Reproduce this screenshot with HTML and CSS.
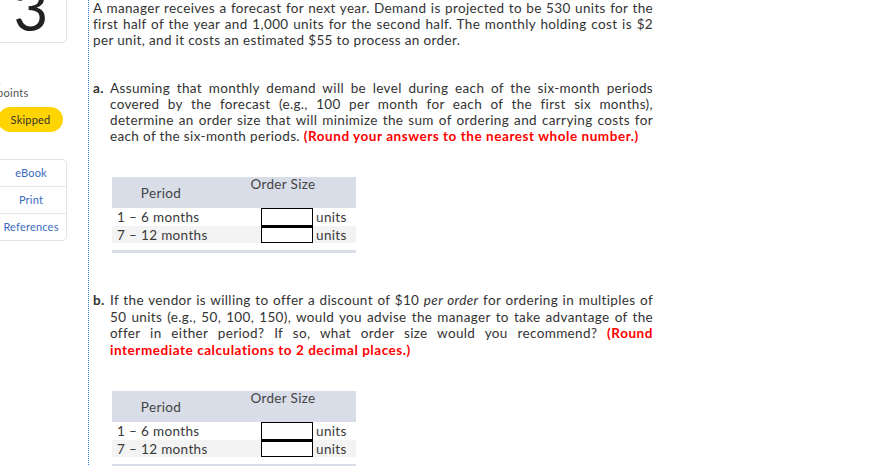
FILE: index.html
```html
<!DOCTYPE html>
<html>
<head>
<meta charset="utf-8">
<link rel="stylesheet" href="styles.css">
</head>
<body>
<div class="page">
  <aside class="side">
    <div class="qnum">3</div>
    <div class="score">1</div>
    <div class="pts">points</div>
    <div class="skipped">Skipped</div>
    <div class="links">
      <div class="link">eBook</div>
      <div class="link">Print</div>
      <div class="link">References</div>
    </div>
  </aside>
  <main class="main">
    <p class="intro">A manager receives a forecast for next year. Demand is projected to be 530 units for the first half of the year and 1,000 units for the second half. The monthly holding cost is $2 per unit, and it costs an estimated $55 to process an order.</p>

    <div class="part part-a">
      <span class="label">a.</span>
      <p class="ptext">Assuming that monthly demand will be level during each of the six-month periods covered by the forecast (e.g., 100 per month for each of the first six months), determine an order size that will minimize the sum of ordering and carrying costs for each of the six-month periods. <b class="red">(Round your answers to the nearest whole number.)</b></p>
    </div>

    <div class="tbl tbl-a">
      <div class="thead">
        <div class="th th-period">Period</div>
        <div class="th th-size">Order Size</div>
      </div>
      <div class="row row1">
        <div class="cell-period">1 – 6 months</div>
        <div class="cell-input"><span class="box"></span></div>
        <div class="cell-unit">units</div>
      </div>
      <div class="row row2">
        <div class="cell-period">7 – 12 months</div>
        <div class="cell-input"><span class="box"></span></div>
        <div class="cell-unit">units</div>
      </div>
      <div class="bar"></div>
    </div>

    <div class="part part-b">
      <span class="label">b.</span>
      <p class="ptext">If the vendor is willing to offer a discount of $10 <i>per order</i> for ordering in multiples of 50 units (e.g., 50, 100, 150), would you advise the manager to take advantage of the offer in either period? If so, what order size would you recommend? <b class="red">(Round intermediate calculations to 2 decimal places.)</b></p>
    </div>

    <div class="tbl tbl-b">
      <div class="thead">
        <div class="th th-period">Period</div>
        <div class="th th-size">Order Size</div>
      </div>
      <div class="row row1">
        <div class="cell-period">1 – 6 months</div>
        <div class="cell-input"><span class="box"></span></div>
        <div class="cell-unit">units</div>
      </div>
      <div class="row row2">
        <div class="cell-period">7 – 12 months</div>
        <div class="cell-input"><span class="box"></span></div>
        <div class="cell-unit">units</div>
      </div>
      <div class="bar"></div>
    </div>
  </main>
</div>
</body>
</html>
```

FILE: styles.css
```css
html, body {
  margin: 0;
  padding: 0;
  background: #fff;
  overflow: hidden;
}
body {
  font-family: Lato, "Liberation Sans", sans-serif;
  color: #333;
}
.page {
  display: flex;
  align-items: stretch;
  min-height: 466px;
}
.side {
  width: 93px;
  margin-left: -5px;
  flex: none;
  display: flex;
  flex-direction: column;
}
.qnum {
  width: 72px;
  height: 62px;
  margin-top: -19px;
  border: 1px solid #e3e3e3;
  border-top: none;
  border-radius: 0 0 5px 5px;
  font-size: 60px;
  font-weight: normal;
  line-height: 54px;
  text-align: center;
  color: #222;
  box-sizing: border-box;
}
.score {
  margin-top: 31px;
  width: 6px;
  font-size: 11px;
  line-height: 12px;
  color: #2f5fb3;
  overflow: hidden;
  text-align: right;
  direction: rtl;
}
.pts {
  padding-left: 2px;
  font-size: 11px;
  line-height: 14px;
  color: #555;
  letter-spacing: 0.3px;
}
.skipped {
  margin-top: 7px;
  margin-left: 3px;
  width: 65px;
  height: 25px;
  border-radius: 13px;
  background: #ffd400;
  font-size: 11px;
  line-height: 25px;
  text-align: center;
  color: #333;
  letter-spacing: 0.2px;
}
.links {
  margin-top: 27px;
  width: 72px;
  border: 1px solid #e2e2e2;
  border-radius: 4px;
  box-sizing: border-box;
}
.link {
  height: 26px;
  line-height: 26px;
  font-size: 11px;
  text-align: center;
  color: #3a6bbf;
  border-top: 1px solid #e6e6e6;
  letter-spacing: 0.2px;
}
.link:first-child {
  border-top: none;
}
.main {
  flex: none;
  width: 560px;
  border-left: 1px dotted #2f7ad8;
  padding-left: 4px;
  font-size: 13.5px;
  line-height: 16px;
  letter-spacing: 0.35px;
}
p {
  margin: 0;
}
.intro {
  text-align: justify;
}
.part {
  display: flex;
}
.part-a {
  margin-top: 32px;
}
.part-b {
  margin-top: 39px;
  line-height: 16.5px;
}
.label {
  width: 17px;
  flex: none;
  font-weight: bold;
}
.ptext {
  flex: 1;
  text-align: justify;
}
.red {
  color: #f00;
  letter-spacing: 0.55px;
}
.tbl {
  margin-left: 19px;
  width: 244px;
  color: #3a3a3a;
}
.tbl-a {
  margin-top: 33px;
}
.tbl-b {
  margin-top: 33px;
}
.thead {
  display: flex;
  height: 31px;
  background: #d9dde8;
  color: #444;
}
.th-period {
  width: 98px;
  text-align: center;
  align-self: center;
}
.th-size {
  flex: 1;
  text-align: center;
  margin-top: -1px;
}
.row {
  display: flex;
  height: 18px;
  align-items: center;
}
.row2 {
  height: 17px;
  background: #f3f3f3;
}
.cell-period {
  width: 98px;
  padding-left: 5px;
  box-sizing: border-box;
}
.cell-input {
  width: 103px;
  height: 100%;
  display: flex;
  justify-content: flex-end;
}
.box {
  width: 52px;
  height: 100%;
  border: 1px solid #000;
  background: #fff;
  box-sizing: border-box;
}
.row2 .box {
  border-top-width: 2px;
}
.cell-unit {
  padding-left: 3px;
}
.bar {
  margin-top: 7px;
  height: 3px;
  background: #d9dde8;
}
```
